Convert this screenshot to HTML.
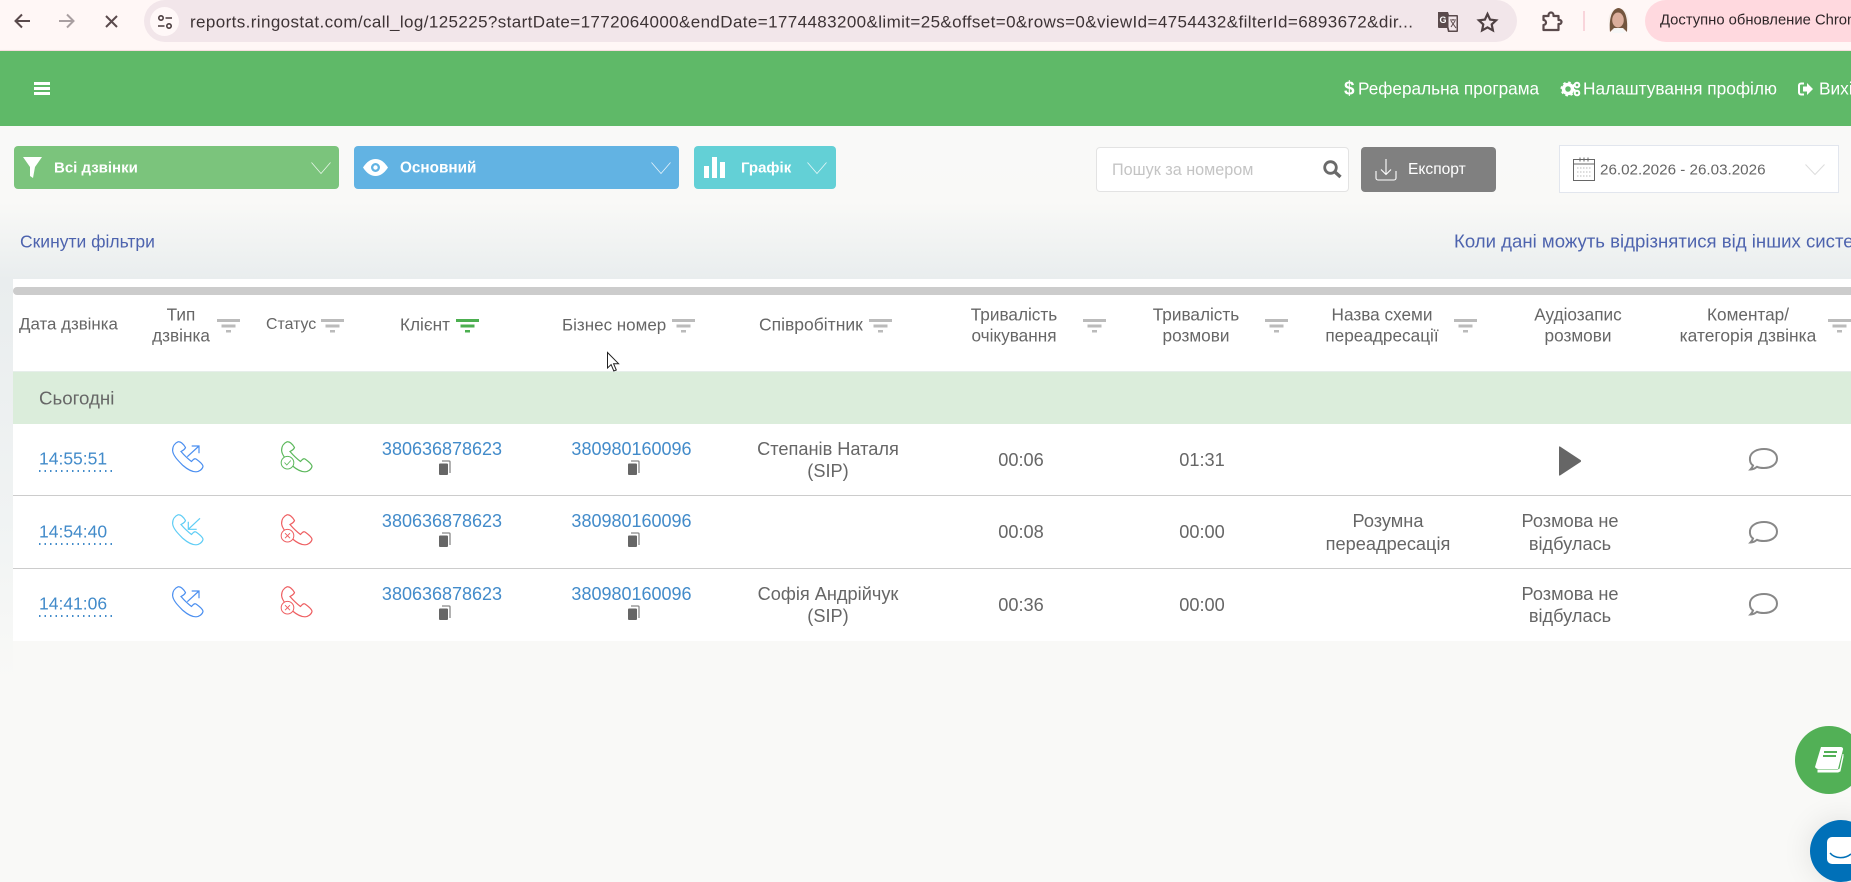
<!DOCTYPE html>
<html lang="uk"><head><meta charset="utf-8"><title>Ringostat</title>
<style>
*{box-sizing:border-box}
html,body{margin:0;padding:0;width:1851px;height:882px;overflow:hidden;background:#f9f9f7;font-family:"Liberation Sans",sans-serif;color:#666}
#p{position:relative;width:1851px;height:882px;overflow:hidden;background:#f9f9f7}
.a{position:absolute}
.t{position:absolute;white-space:nowrap;line-height:1;transform:translateY(-50%)}
.c{transform:translate(-50%,-50%);text-align:center}
.h{font-size:17.2px;color:#666}
.b{font-size:18.2px;color:#666}
.l{font-size:18px;color:#428bca}
.tm{font-size:17.5px;color:#428bca}
svg{position:absolute;overflow:visible;display:block}
.btn{position:absolute;top:146px;height:43px;border-radius:4px}
.btxt{font-size:15px;font-weight:bold;color:#fff;top:168px}
.ul{position:absolute;height:1.5px;width:73px;left:39px;background:repeating-linear-gradient(to right,#428bca 0 1.5px,transparent 1.5px 5.5px)}
.line{position:absolute;left:13px;width:1838px;height:1px;background:#ccc}
</style></head><body><div id="p">

<!-- browser chrome -->
<div class="a" style="left:0;top:0;width:1851px;height:51px;background:#fff7f6;border-bottom:1px solid #fbdfe2"></div>
<svg style="left:13px;top:13px" width="18" height="16" viewBox="0 0 18 16" fill="none" stroke="#5a4a4c" stroke-width="2"><path d="M17 8H3M9 1.500 2.500 8 9 14.500"/></svg>
<svg style="left:58px;top:13px" width="18" height="16" viewBox="0 0 18 16" fill="none" stroke="#a99fa1" stroke-width="2"><path d="M1 8h14M9 1.500 15.500 8 9 14.500"/></svg>
<svg style="left:105px;top:15px" width="13" height="13" viewBox="0 0 13 13" fill="none" stroke="#5a4a4c" stroke-width="2"><path d="M1 1l11 11M12 1 1 12"/></svg>
<div class="a" style="left:144px;top:0;width:1373px;height:42px;border-radius:21px;background:#f2e6ea"></div>
<div class="a" style="left:150px;top:7px;width:29px;height:29px;border-radius:50%;background:#fff8f8"></div>
<svg style="left:157px;top:14px" width="16" height="16" viewBox="0 0 16 16" fill="none" stroke="#4a3c3e" stroke-width="1.600"><circle cx="4" cy="4" r="2.200"/><path d="M8.500 4H15M1 12h6.500"/><circle cx="12" cy="12" r="2.200"/></svg>
<div class="t" style="left:190px;top:22px;font-size:17px;letter-spacing:.39px;color:#3d3335">reports.ringostat.com/call_log/125225?startDate=1772064000&amp;endDate=1774483200&amp;limit=25&amp;offset=0&amp;rows=0&amp;viewId=4754432&amp;filterId=6893672&amp;dir...</div>
<svg style="left:1437px;top:11px" width="22" height="22" viewBox="0 0 22 22"><path d="M1 1h10l1 3h8a1 1 0 0 1 1 1v15a1 1 0 0 1-1 1H11l-1-4H2a1 1 0 0 1-1-1z" fill="#5a4a4c"/><path d="M11 5h9v15h-8l-1-4z" fill="#f2e6ea" stroke="#5a4a4c"/><path d="M13 9h6M16 8v1M14 16l4-6M14 10l5 7" stroke="#5a4a4c" fill="none"/><text x="2.500" y="12" font-size="9" font-weight="bold" fill="#fff" font-family="Liberation Sans">G</text></svg>
<svg style="left:1477px;top:12px" width="21" height="20" viewBox="0 0 21 20" fill="none" stroke="#4f4143" stroke-width="2.200"><path d="M10.500 2l2.600 5.600 6 .7-4.400 4.100 1.200 6-5.400-3-5.400 3 1.200-6L1.900 8.300l6-.7z"/></svg>
<svg style="left:1542px;top:12px" width="20" height="19" viewBox="0 0 20 19" fill="none" stroke="#5a4a4c" stroke-width="2.200"><path d="M1.500 4H6.500V3a2.500 2.500 0 0 1 5 0v1H16.500V8h1a2 2 0 0 1 0 4h-1v6H1.500v-5a2.500 2.500 0 0 0 0-5z" stroke-linejoin="round"/></svg>
<div class="a" style="left:1583px;top:11px;width:2px;height:20px;background:#f9d5db"></div>
<svg style="left:1608px;top:8px" width="21" height="26" viewBox="0 0 21 26"><ellipse cx="10.500" cy="12.500" rx="10" ry="12.500" fill="#f5eeea"/><path d="M2 24C1 12 3 1 10.500 0 18 1 20 12 19 24l-4-4H6z" fill="#74553e"/><ellipse cx="10" cy="12" rx="5.800" ry="7.500" fill="#dcae9c"/><path d="M4 25c1-3 3-5 6.500-5s5.500 2 6.500 5z" fill="#f7f7f7"/></svg>
<div class="a" style="left:1645px;top:0;width:230px;height:42px;border-radius:21px;background:#ffd9df"></div>
<div class="t" style="left:1660px;top:21px;font-size:14.800px;color:#2d2527">Доступно обновление Chrome</div>

<!-- green nav -->
<div class="a" style="left:0;top:51px;width:1851px;height:75px;background:#5fb968;box-shadow:0 2px 4px rgba(0,0,0,.12)"></div>
<div class="a" style="left:34px;top:82px;width:16px;height:3px;background:#fff"></div>
<div class="a" style="left:34px;top:87px;width:16px;height:3px;background:#fff"></div>
<div class="a" style="left:34px;top:92px;width:16px;height:3px;background:#fff"></div>
<div class="t" style="left:1344px;top:89px;font-size:19px;font-weight:bold;color:#fff">$</div>
<div class="t" style="left:1358px;top:89px;font-size:17.200px;color:#fff">Реферальна програма</div>
<svg style="left:1561px;top:81px" width="20" height="16" viewBox="0 0 20 16"><circle cx="7" cy="8" r="4.500" fill="none" stroke="#fff" stroke-width="3.500"/><circle cx="7" cy="8" r="6.500" fill="none" stroke="#fff" stroke-width="2" stroke-dasharray="2.500 2.600"/><circle cx="16" cy="4" r="2.300" fill="none" stroke="#fff" stroke-width="2"/><circle cx="16" cy="12" r="2.300" fill="none" stroke="#fff" stroke-width="2"/></svg>
<div class="t" style="left:1583px;top:89px;font-size:17.300px;color:#fff">Налаштування профілю</div>
<svg style="left:1798px;top:82px" width="15" height="14" viewBox="0 0 15 14"><path d="M6 1.500H3a2 2 0 0 0-2 2v7a2 2 0 0 0 2 2h3" fill="none" stroke="#fff" stroke-width="2"/><path d="M5 4.500h4V1l6 6-6 6V9.500H5z" fill="#fff"/></svg>
<div class="t" style="left:1819px;top:89px;font-size:17.300px;color:#fff">Вихід</div>

<!-- page background -->
<div class="a" style="left:0;top:126px;width:1851px;height:153px;background:linear-gradient(#f9f9f8 0%,#f9f9f7 50%,#e9edee 100%)"></div>
<div class="a" style="left:0;top:279px;width:13px;height:400px;background:linear-gradient(#e9edee,#f0f3f3 60%,#f9f9f7)"></div>

<!-- filter buttons -->
<div class="btn" style="left:14px;width:325px;background:#7bc47c"></div>
<svg style="left:23px;top:157px" width="19" height="21" viewBox="0 0 19 21"><path d="M0 0h19l-7 10-2 11-3-2v-9z" fill="#fff"/></svg>
<div class="t btxt" style="left:54px">Всі дзвінки</div>
<svg style="left:311px;top:162px" width="20" height="12" viewBox="0 0 20 12" fill="none" stroke="#e6f5e6" stroke-width=".8"><path d="M.5.500 10 11.500 19.500.500"/></svg>

<div class="btn" style="left:354px;width:325px;background:#62b3e3"></div>
<svg style="left:363px;top:159px" width="25" height="17" viewBox="0 0 25 17"><path d="M0 8.500C4 2.500 8 0 12.500 0S21 2.500 25 8.500C21 14.500 17 17 12.500 17S4 14.500 0 8.500z" fill="#fff"/><circle cx="12.500" cy="8.500" r="4.500" fill="#62b3e3"/><circle cx="12.500" cy="8.500" r="2.200" fill="#fff"/></svg>
<div class="t btxt" style="left:400px;font-size:15.300px">Основний</div>
<svg style="left:651px;top:162px" width="20" height="12" viewBox="0 0 20 12" fill="none" stroke="#e6f3fb" stroke-width=".8"><path d="M.5.500 10 11.500 19.500.500"/></svg>

<div class="btn" style="left:694px;width:142px;background:#63d0d6"></div>
<svg style="left:704px;top:157px" width="21" height="21" viewBox="0 0 21 21" fill="#fff"><rect x="0" y="9" width="5" height="12"/><rect x="8" y="0" width="5" height="21"/><rect x="16" y="5" width="5" height="16"/></svg>
<div class="t btxt" style="left:741px">Графік</div>
<svg style="left:807px;top:162px" width="20" height="12" viewBox="0 0 20 12" fill="none" stroke="#e6f8f9" stroke-width=".8"><path d="M.5.500 10 11.500 19.500.500"/></svg>

<!-- search / export / date -->
<div class="a" style="left:1096px;top:147px;width:253px;height:45px;background:#fff;border:1px solid #e3e3e3;border-radius:4px"></div>
<div class="t" style="left:1112px;top:170px;font-size:16.200px;color:#c4c4c4">Пошук за номером</div>
<svg style="left:1323px;top:160px" width="19" height="18" viewBox="0 0 19 18" fill="none" stroke="#6a6a6a"><circle cx="7.500" cy="7.500" r="5.800" stroke-width="2.800"/><path d="M12 12l5.500 5" stroke-width="3.400"/></svg>
<div class="a" style="left:1361px;top:147px;width:135px;height:45px;background:#808080;border-radius:4px"></div>
<svg style="left:1375px;top:159px" width="22" height="22" viewBox="0 0 22 22" fill="none" stroke="#fff" stroke-width="1.100"><path d="M1 12v7a2 2 0 0 0 2 2h16a2 2 0 0 0 2-2v-7M11 0v15M6 10.500l5 5 5-5"/></svg>
<div class="t" style="left:1408px;top:170px;font-size:15.600px;color:#fff">Експорт</div>
<div class="a" style="left:1559px;top:145px;width:280px;height:48px;background:#fff;border:1px solid #e2e6ee"></div>
<svg style="left:1573px;top:157px" width="22" height="24" viewBox="0 0 22 24" fill="none" stroke="#666"><rect x=".5" y="2.500" width="21" height="21"/><path d="M.5 7h21M7 .5v4M11 .5v4M15 .5v4"/><path d="M4 11h14M4 15h14M4 19h14" stroke="#bbb" stroke-dasharray="1.500 1.500"/></svg>
<div class="t" style="left:1600px;top:170px;font-size:15.200px;color:#666">26.02.2026 - 26.03.2026</div>
<svg style="left:1805px;top:164px" width="20" height="11" viewBox="0 0 20 11" fill="none" stroke="#ddd"><path d="M.5.500 10 10.500 19.500.500"/></svg>

<div class="t" style="left:20px;top:242px;font-size:17.500px;color:#4d63ae">Скинути фільтри</div>
<div class="t" style="left:1454px;top:242px;font-size:18.600px;color:#4d63ae">Коли дані можуть відрізнятися від інших систем</div>

<!-- table -->
<div class="a" style="left:13px;top:279px;width:1838px;height:362px;background:#fff"></div>
<div class="a" style="left:13px;top:287px;width:1838px;height:8px;background:#ccc;border-radius:4px 0 0 4px"></div>
<div class="a" style="left:13px;top:371px;width:1838px;height:53px;background:#dbeddb;border-top:1px solid #e6eeea"></div>
<div class="line" style="top:495px"></div>
<div class="line" style="top:568px"></div>

<!-- table head -->
<div class="t h" style="left:19px;top:325px;font-size:16.900px">Дата дзвінка</div>
<div class="t h c" style="left:181px;top:315px">Тип</div><div class="t h c" style="left:181px;top:336px">дзвінка</div>
<div class="t h" style="left:266px;top:325px;font-size:15.900px">Статус</div>
<div class="t h" style="left:400px;top:325px">Клієнт</div>
<div class="t h" style="left:562px;top:325px;font-size:17px">Бізнес номер</div>
<div class="t h" style="left:759px;top:325px;font-size:17.500px">Співробітник</div>
<div class="t h c" style="left:1014px;top:315px">Тривалість</div><div class="t h c" style="left:1014px;top:336px">очікування</div>
<div class="t h c" style="left:1196px;top:315px">Тривалість</div><div class="t h c" style="left:1196px;top:336px">розмови</div>
<div class="t h c" style="left:1382px;top:315px">Назва схеми</div><div class="t h c" style="left:1382px;top:336px">переадресації</div>
<div class="t h c" style="left:1578px;top:315px">Аудіозапис</div><div class="t h c" style="left:1578px;top:336px">розмови</div>
<div class="t h c" style="left:1748px;top:315px">Коментар/</div><div class="t h c" style="left:1748px;top:336px;font-size:17.400px">категорія дзвінка</div>

<svg width="0" height="0"><defs>
<g id="f"><rect x="0" y="0" width="23" height="3"/><rect x="4.500" y="5.500" width="14" height="3"/><rect x="9" y="11" width="5" height="2.500"/></g>
<g id="ph" fill="none" stroke-width="1.200"><path d="M6 .8C3 2 .6 5 .6 9.500 1 15 7 20.500 11 24.500 15 28 19 30.800 24 30.800 27 30.800 30.300 28.500 31 25.500 31 24 29 21.500 24 18 22 17 21 19 19.500 20.500 15.500 17.500 12 14 9 10.500 12 9 13 8 13.500 6.500 12 4 9 .3 6 .8Z"/></g>
<g id="up" fill="none" stroke-width="1.200"><path d="M15.300 15.700 27 5M19.700 5H27v7.300"/></g>
<g id="dn" fill="none" stroke-width="1.200"><path d="M28 4.300 16.300 15.300M16.300 7.700v7.600h8.400"/></g>
<g id="cp"><path d="M3 0h7a1 1 0 0 1 1 1v11" fill="none" stroke="#888" stroke-width="1.300"/><path d="M1 2.500h7a1 1 0 0 1 1 1v9.500a1 1 0 0 1-1 1H1a1 1 0 0 1-1-1v-9.500a1 1 0 0 1 1-1z" fill="#666"/></g>
<g id="cm"><path d="M4 17.500C1 15.500 .7 12 1 9.500 2 4 8 1 15 1c7 0 13 3.500 13 9.500S22 20 15 20c-2.500 0-5-.3-7-1.200-2 1.700-4.500 2.700-6.500 2.700 1.300-1.300 2-2.600 2.500-4z" fill="none" stroke="#888" stroke-width="2"/></g>
</defs></svg>

<svg style="left:217px;top:319px" width="23" height="14" fill="#bbb"><use href="#f"/></svg>
<svg style="left:321px;top:319px" width="23" height="14" fill="#bbb"><use href="#f"/></svg>
<svg style="left:456px;top:319px" width="23" height="14" fill="#4caf50"><use href="#f"/></svg>
<svg style="left:672px;top:319px" width="23" height="14" fill="#bbb"><use href="#f"/></svg>
<svg style="left:869px;top:319px" width="23" height="14" fill="#bbb"><use href="#f"/></svg>
<svg style="left:1083px;top:319px" width="23" height="14" fill="#bbb"><use href="#f"/></svg>
<svg style="left:1265px;top:319px" width="23" height="14" fill="#bbb"><use href="#f"/></svg>
<svg style="left:1454px;top:319px" width="23" height="14" fill="#bbb"><use href="#f"/></svg>
<svg style="left:1828px;top:319px" width="23" height="14" fill="#bbb"><use href="#f"/></svg>

<div class="t b" style="left:39px;top:399px;font-size:18.700px">Сьогодні</div>

<!-- row 1 -->
<div class="t tm" style="left:39px;top:459px">14:55:51</div><div class="ul" style="top:470px"></div>
<svg style="left:172px;top:441px" width="32" height="32" stroke="#4b8ff0"><use href="#ph"/><use href="#up"/></svg>
<svg style="left:281px;top:441px" width="32" height="32" stroke="#5cb85c"><use href="#ph"/><circle cx="6.500" cy="21.700" r="6.300" fill="#fff" stroke-width="1"/><path d="M3.500 21.500l2.300 2.500 4-4.500" fill="none" stroke-width=".9"/></svg>
<div class="t l c" style="left:442px;top:449px">380636878623</div>
<svg style="left:439px;top:461px" width="12" height="14"><use href="#cp"/></svg>
<div class="t l c" style="left:631.500px;top:449px">380980160096</div>
<svg style="left:628px;top:461px" width="12" height="14"><use href="#cp"/></svg>
<div class="t b c" style="left:828px;top:449px">Степанів Наталя</div><div class="t b c" style="left:828px;top:471px">(SIP)</div>
<div class="t b c" style="left:1021px;top:460px">00:06</div>
<div class="t b c" style="left:1202px;top:460px">01:31</div>
<svg style="left:1559px;top:445px" width="23" height="32" viewBox="0 0 23 32"><path d="M1 1.500 21.500 15a1.200 1.200 0 0 1 0 2L1 30.500a.7.7 0 0 1-1-.5V2a.7.7 0 0 1 1-.5z" fill="#666"/></svg>
<svg style="left:1749px;top:448px" width="30" height="23"><use href="#cm"/></svg>

<!-- row 2 -->
<div class="t tm" style="left:39px;top:532px">14:54:40</div><div class="ul" style="top:543px"></div>
<svg style="left:172px;top:514px" width="32" height="32" stroke="#5fcdf5"><use href="#ph"/><use href="#dn"/></svg>
<svg style="left:281px;top:514px" width="32" height="32" stroke="#ee5f62"><use href="#ph"/><circle cx="6.500" cy="21.700" r="6.300" fill="#fff" stroke-width="1"/><path d="M4 19.200l5 5M9 19.200l-5 5" fill="none" stroke-width="1"/></svg>
<div class="t l c" style="left:442px;top:521px">380636878623</div>
<svg style="left:439px;top:533px" width="12" height="14"><use href="#cp"/></svg>
<div class="t l c" style="left:631.500px;top:521px">380980160096</div>
<svg style="left:628px;top:533px" width="12" height="14"><use href="#cp"/></svg>
<div class="t b c" style="left:1021px;top:532px">00:08</div>
<div class="t b c" style="left:1202px;top:532px">00:00</div>
<div class="t b c" style="left:1388px;top:521px">Розумна</div><div class="t b c" style="left:1388px;top:544px">переадресація</div>
<div class="t b c" style="left:1570px;top:521px">Розмова не</div><div class="t b c" style="left:1570px;top:544px">відбулась</div>
<svg style="left:1749px;top:521px" width="30" height="23"><use href="#cm"/></svg>

<!-- row 3 -->
<div class="t tm" style="left:39px;top:604px">14:41:06</div><div class="ul" style="top:615px"></div>
<svg style="left:172px;top:586px" width="32" height="32" stroke="#4b8ff0"><use href="#ph"/><use href="#up"/></svg>
<svg style="left:281px;top:586px" width="32" height="32" stroke="#ee5f62"><use href="#ph"/><circle cx="6.500" cy="21.700" r="6.300" fill="#fff" stroke-width="1"/><path d="M4 19.200l5 5M9 19.200l-5 5" fill="none" stroke-width="1"/></svg>
<div class="t l c" style="left:442px;top:593.500px">380636878623</div>
<svg style="left:439px;top:606px" width="12" height="14"><use href="#cp"/></svg>
<div class="t l c" style="left:631.500px;top:593.500px">380980160096</div>
<svg style="left:628px;top:606px" width="12" height="14"><use href="#cp"/></svg>
<div class="t b c" style="left:828px;top:594px">Софія Андрійчук</div><div class="t b c" style="left:828px;top:616px">(SIP)</div>
<div class="t b c" style="left:1021px;top:605px">00:36</div>
<div class="t b c" style="left:1202px;top:605px">00:00</div>
<div class="t b c" style="left:1570px;top:594px">Розмова не</div><div class="t b c" style="left:1570px;top:616px">відбулась</div>
<svg style="left:1749px;top:593px" width="30" height="23"><use href="#cm"/></svg>

<!-- cursor -->
<svg style="left:607px;top:352px" width="14" height="20" viewBox="0 0 14 20"><path d="M.5.500v15.500l3.600-3.400 2.700 6.400 2.500-1-2.700-6.300h5z" fill="#fff" stroke="#222"/></svg>

<!-- floating buttons -->
<div class="a" style="left:1795px;top:726px;width:68px;height:68px;border-radius:50%;background:#52b056"></div>
<svg style="left:1814px;top:745px" width="30" height="30" viewBox="0 0 30 30"><path d="M7 2h20a2 2 0 0 1 2 2.500L24 24H5a4 4 0 0 1-4-2z" fill="#fff"/><path d="M4 25h20l2-1 3-14v-1 3l-3 14-2 1H4z" fill="#fff" stroke="#fff"/><path d="M10 7h13M9 11h13" stroke="#52b056" stroke-width="2"/></svg>
<div class="a" style="left:1810px;top:820px;width:62px;height:62px;border-radius:50%;background:#0070b8;box-shadow:0 0 30px rgba(0,0,0,.1)"></div>
<div class="a" style="left:1827px;top:837px;width:30px;height:27px;background:#fff;border-radius:5px 0 0 5px"></div>
<svg style="left:1829px;top:852px" width="22" height="8" viewBox="0 0 22 8" fill="none" stroke="#0070b8" stroke-width="1.500"><path d="M1 1c5 6 15 6 21 1"/></svg>
</div></body></html>
